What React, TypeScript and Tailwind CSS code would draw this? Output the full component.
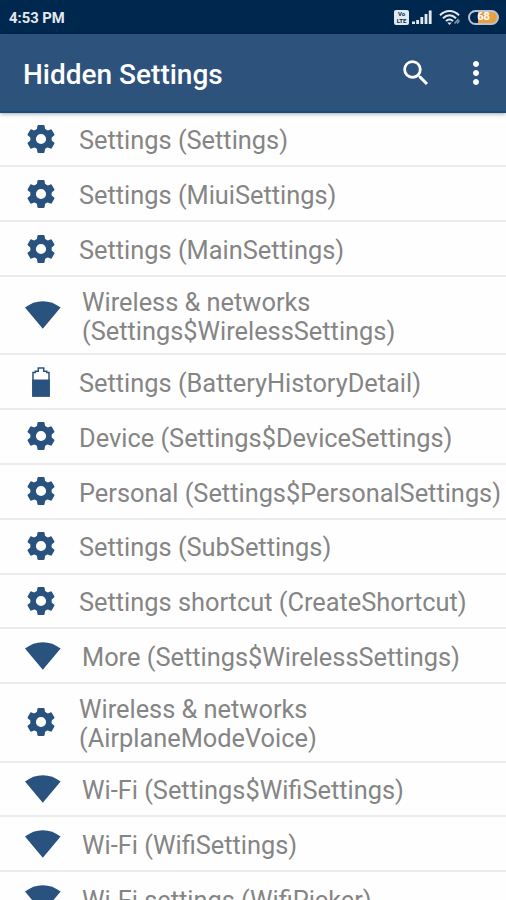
import React from 'react';

type IconKind = 'gear' | 'wifi' | 'battery';

interface SettingItem {
    icon: IconKind;
    lines: string[];
}

const items: SettingItem[] = [
    { icon: 'gear', lines: ['Settings (Settings)'] },
    { icon: 'gear', lines: ['Settings (MiuiSettings)'] },
    { icon: 'gear', lines: ['Settings (MainSettings)'] },
    { icon: 'wifi', lines: ['Wireless & networks', '(Settings$WirelessSettings)'] },
    { icon: 'battery', lines: ['Settings (BatteryHistoryDetail)'] },
    { icon: 'gear', lines: ['Device (Settings$DeviceSettings)'] },
    { icon: 'gear', lines: ['Personal (Settings$PersonalSettings)'] },
    { icon: 'gear', lines: ['Settings (SubSettings)'] },
    { icon: 'gear', lines: ['Settings shortcut (CreateShortcut)'] },
    { icon: 'wifi', lines: ['More (Settings$WirelessSettings)'] },
    { icon: 'gear', lines: ['Wireless & networks', '(AirplaneModeVoice)'] },
    { icon: 'wifi', lines: ['Wi-Fi (Settings$WifiSettings)'] },
    { icon: 'wifi', lines: ['Wi-Fi (WifiSettings)'] },
    { icon: 'wifi', lines: ['Wi-Fi settings (WifiPicker)'] },
];

const toothAngles = [0, 60, 120, 180, 240, 300];

function RowIcon({ kind }: { kind: IconKind }) {
    if (kind === 'wifi') {
        return (
            <svg className="ml-[25px] h-[28px] w-[36px] shrink-0" viewBox="0 0 36 28" fill="#29527f">
                <path d="M0 6.6C5.2 2.4 11.3.2 17.8.2s12.6 2.2 17.8 6.4L17.8 27.8z" />
            </svg>
        );
    }
    if (kind === 'battery') {
        return (
            <svg className="ml-[32px] h-[30px] w-[18px] shrink-0" viewBox="0 0 18 30">
                <path
                    d="M6.3 1h5.4v3.2h3v1.4h2.3V29H1V5.6h2.3V4.2h3z"
                    fill="#fff"
                    stroke="#29527f"
                    strokeWidth="1.5"
                />
                <path d="M.2 12.5h17.6v17.1H.2z" fill="#29527f" />
            </svg>
        );
    }
    return (
        <svg className="ml-[27px] h-[28px] w-[28px] shrink-0" viewBox="-14 -14 28 28" fill="#29527f">
            <circle r="7.9" fill="none" stroke="#29527f" strokeWidth="5.6" />
            {toothAngles.map((angle) => (
                <path key={angle} d="M-4.4-8l.8-5q.1-.9 1-.9h5.2q.9 0 1 .9l.8 5z" transform={`rotate(${angle})`} />
            ))}
        </svg>
    );
}

function StatusBar() {
    return (
        <div className="flex h-[34px] shrink-0 items-center bg-[#00284f] pr-[7px] pl-[9px] text-[#e4e9f0]">
            <span className="flex-1 pt-[2px] text-[14.8px] font-bold">4:53 PM</span>
            <div className="mr-[3px] flex h-[15px] w-[15px] flex-col items-center justify-center rounded-[2px] bg-[#e4e9f0] text-[6px] leading-[7px] font-bold text-[#00284f]">
                <span>Vo</span>
                <span>LTE</span>
            </div>
            <svg className="mr-[7px] h-[16px] w-[20px]" viewBox="0 0 20 16" fill="currentColor">
                <path d="M0 12.5h3V15H0zM4.2 11h2.8v4H4.200zM8.400 8h2.800v7H8.400zM12.600 5h2.800v10h-2.800zM16.800 1.500h2.800V15h-2.800z" />
            </svg>
            <svg className="mr-[7px] h-[17px] w-[22px]" viewBox="0 0 22 17" fill="none" stroke="currentColor">
                <path d="M1 6.2C6.5.5 14.5.5 20 6.200M4 9.300c4-4 9-4 13 0M7 12.200c2-2.200 5-2.200 7 0" strokeWidth="2" />
                <path d="M8.3 13.5l2.2 2.5 2.2-2.5z" fill="currentColor" stroke="none" />
                <path d="M15.5 14.5l4-4.500M18 14.500l2.500-3" stroke="#8795aa" strokeWidth="1.5" />
            </svg>
            <div className="flex h-[15px] w-[31px] items-center justify-center rounded-full border-2 border-[#bac2cd] bg-[linear-gradient(90deg,#00284f_30%,#e9a040_30%)] text-[11px] font-bold text-white">
                68
            </div>
        </div>
    );
}

export default function App() {
    return (
        <div className="flex h-[900px] w-[506px] flex-col overflow-hidden bg-[#fefefe] font-[Roboto,sans-serif]">
            <StatusBar />
            <header className="relative z-10 flex h-[79px] shrink-0 items-center border-b-2 border-[#194a7c] bg-[#2d527c] pl-[23px] text-white shadow-[0_1px_4px_rgba(0,0,0,0.35)]">
                <h1 className="flex-1 pt-[5px] text-[28px] font-medium">Hidden Settings</h1>
                <svg className="mr-[25px] h-[34px] w-[34px]" viewBox="0 0 24 24" fill="currentColor">
                    <path d="M15.5 14h-.79l-.28-.27A6.471 6.471 0 0 0 16 9.5 6.5 6.5 0 1 0 9.5 16c1.61 0 3.09-.59 4.23-1.57l.27.28v.79l5 4.99L20.49 19l-4.99-5zm-6 0C7.01 14 5 11.99 5 9.5S7.01 5 9.5 5 14 7.01 14 9.5 11.99 14 9.5 14z" />
                </svg>
                <svg className="mr-[12px] h-[36px] w-[36px]" viewBox="0 0 24 24" fill="currentColor">
                    <path d="M12 8c1.1 0 2-.9 2-2s-.9-2-2-2-2 .9-2 2 .9 2 2 2zm0 2c-1.1 0-2 .9-2 2s.9 2 2 2 2-.9 2-2-.9-2-2-2zm0 6c-1.1 0-2 .9-2 2s.9 2 2 2 2-.9 2-2-.9-2-2-2z" />
                </svg>
            </header>
            <ul className="-mt-[0.6px]">
                {items.map((item) => (
                    <li
                        key={item.lines.join(' ')}
                        className={`flex items-center border-b-2 border-[#ebebeb] ${item.lines.length > 1 ? 'h-[78.2px]' : 'h-[54.87px]'}`}
                    >
                        <div className={`flex shrink-0 items-center ${item.icon === 'wifi' ? 'w-[82px]' : 'w-[79px]'}`}>
                            <RowIcon kind={item.icon} />
                        </div>
                        <div className="pt-[4px] text-[25.36px] leading-[29.5px] whitespace-nowrap text-[#858585]">
                            {item.lines.map((line) => (
                                <div key={line}>{line}</div>
                            ))}
                        </div>
                    </li>
                ))}
            </ul>
        </div>
    );
}
